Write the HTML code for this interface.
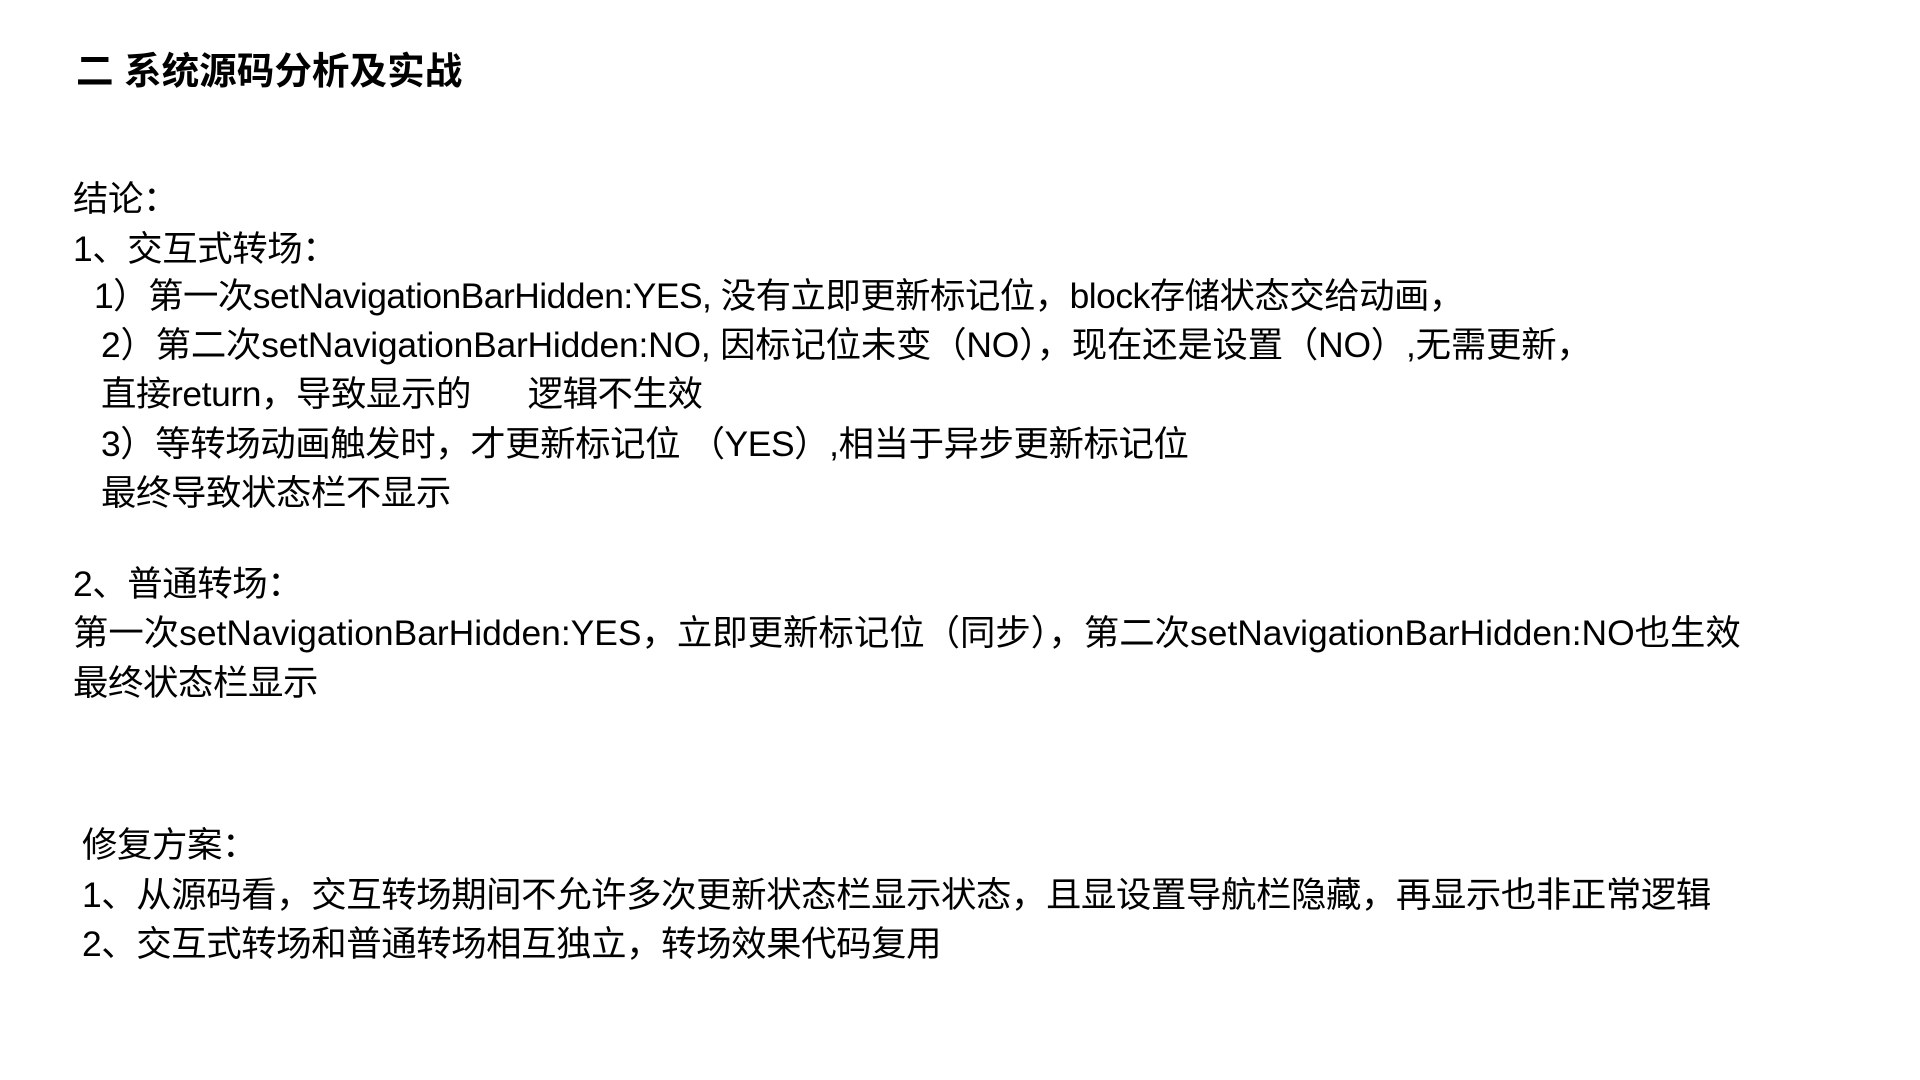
<!DOCTYPE html>
<html><head><meta charset="utf-8"><style>
html,body{margin:0;padding:0;background:#fff;width:1920px;height:1080px;overflow:hidden}
.l{position:absolute;white-space:pre;font-family:"Liberation Sans","Noto Sans CJK SC",sans-serif;font-size:35.4px;line-height:50px;color:#000}
.c{letter-spacing:-0.4px}
.t{font-weight:bold;font-size:37.6px}
</style></head><body>
<div class="l t" style="left:76px;top:46px">二 系统源码分析及实战</div>
<div class="l c" style="left:73px;top:174px">结论：</div>
<div class="l c" style="left:73px;top:224px">1、交互式转场：</div>
<div class="l" style="left:94px;top:271px;letter-spacing:-0.5px">1）第一次setNavigationBarHidden:YES, 没有立即更新标记位，block存储状态交给动画，</div>
<div class="l" style="left:101px;top:320px;letter-spacing:-0.2px">2）第二次setNavigationBarHidden:NO, 因标记位未变（NO），现在还是设置（NO）,无需更新，</div>
<div class="l c" style="left:101px;top:369px">直接return，导致显示的      逻辑不生效</div>
<div class="l c" style="left:101px;top:419px">3）等转场动画触发时，才更新标记位 （YES）,相当于异步更新标记位</div>
<div class="l c" style="left:101px;top:468px">最终导致状态栏不显示</div>
<div class="l c" style="left:73px;top:559px">2、普通转场：</div>
<div class="l" style="left:73px;top:608px">第一次setNavigationBarHidden:YES，立即更新标记位（同步），第二次setNavigationBarHidden:NO也生效</div>
<div class="l c" style="left:73px;top:658px">最终状态栏显示</div>
<div class="l c" style="left:82px;top:820px">修复方案：</div>
<div class="l c" style="left:82px;top:870px">1、从源码看，交互转场期间不允许多次更新状态栏显示状态，且显设置导航栏隐藏，再显示也非正常逻辑</div>
<div class="l c" style="left:82px;top:919px">2、交互式转场和普通转场相互独立，转场效果代码复用</div>
</body></html>
